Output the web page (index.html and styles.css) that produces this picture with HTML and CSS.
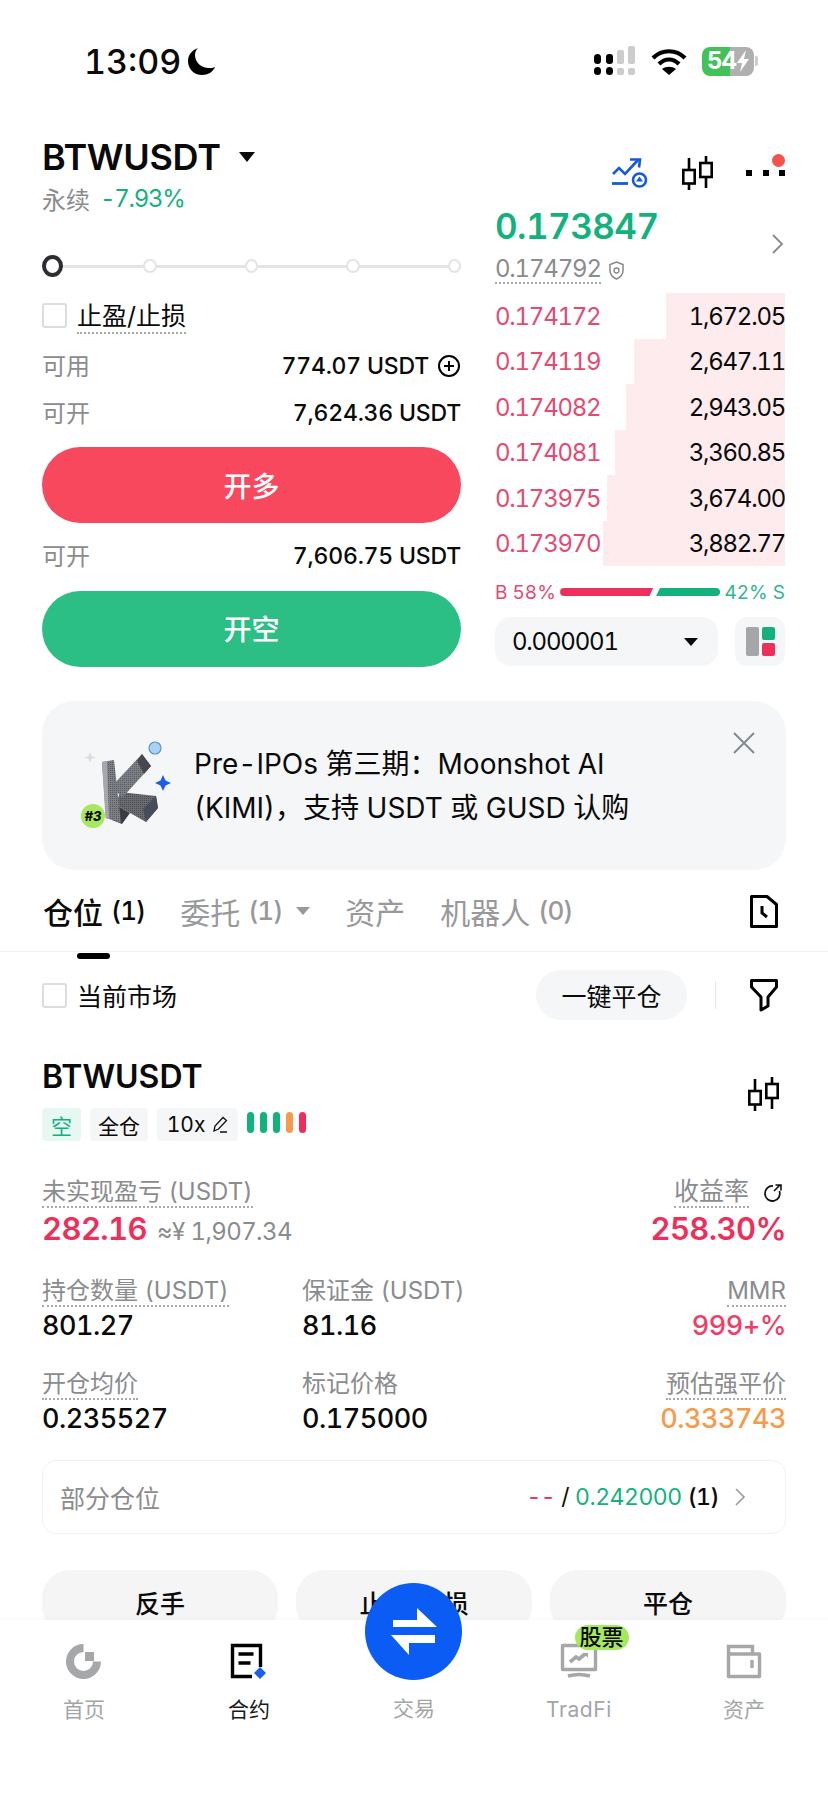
FILE: index.html
```html
<!DOCTYPE html>
<html lang="zh-CN">
<head>
<meta charset="utf-8">
<title>BTWUSDT 永续</title>
<link rel="stylesheet" href="styles.css">
</head>
<body>
<div class="page">

  <header class="status">
    <div class="clock">
      <span>13:09</span>
      <svg class="moon" width="29" height="29" viewBox="0 0 29 29"><path d="M11 1C5 3 1 8 1 14c0 8 6 14 14 14 6 0 11-3 13-8-2 1-4 1-6 1C14 21 8 15 8 8c0-3 1-5 3-7z" fill="#000"/></svg>
    </div>
    <div class="status-icons">
      <svg width="42" height="30" viewBox="0 0 42 30">
        <rect x="0" y="8" width="7" height="10" rx="3.5" fill="#000"/>
        <rect x="12" y="8" width="7" height="10" rx="3" fill="#000"/>
        <rect x="23" y="4" width="7" height="14" rx="2" fill="#ccc"/>
        <rect x="34" y="0" width="7" height="18" rx="2" fill="#ccc"/>
        <rect x="0" y="21" width="7" height="8" rx="3.5" fill="#000"/>
        <rect x="12" y="21" width="7" height="8" rx="3.5" fill="#000"/>
        <rect x="23" y="22" width="7" height="7" rx="2" fill="#ccc"/>
        <rect x="34" y="22" width="7" height="7" rx="2" fill="#ccc"/>
      </svg>
      <svg width="36" height="27" viewBox="0 0 36 27">
        <path d="M2 10C11 1 25 1 34 10" fill="none" stroke="#000" stroke-width="4.2"/>
        <path d="M8 16C14 10 22 10 28 16" fill="none" stroke="#000" stroke-width="4.2"/>
        <path d="M18 27l-7-6c4-3 10-3 14 0z" fill="#000"/>
      </svg>
      <div class="battery">
        <div class="battery-body">
          <span class="battery-level">54</span>
          <svg class="bolt" width="14" height="22" viewBox="0 0 14 22"><path d="M10 0L1 13h5l-2 9 9-13H8z" fill="#fff"/></svg>
        </div>
        <i class="battery-nub"></i>
      </div>
    </div>
  </header>

  <section class="trade">
    <div class="order-form">
      <div class="symbol"><span>BTWUSDT</span><i class="caret caret-lg"></i></div>
      <div class="symbol-sub"><span class="muted">永续</span><span class="up change">-7.93%</span></div>

      <div class="leverage">
        <i class="knob"></i>
        <i class="stop"></i><i class="stop"></i><i class="stop"></i><i class="stop"></i>
      </div>

      <label class="check-row">
        <i class="box"></i><span class="dotted">止盈/止损</span>
      </label>

      <div class="kv kv-avail">
        <span class="muted">可用</span>
        <span class="kv-value">774.07 USDT
          <svg width="24" height="24" viewBox="0 0 24 24"><circle cx="12" cy="12" r="10" fill="none" stroke="#000" stroke-width="2"/><path d="M7 12h10M12 7v10" stroke="#000" stroke-width="2"/></svg>
        </span>
      </div>
      <div class="kv kv-long"><span class="muted">可开</span><span class="kv-value">7,624.36 USDT</span></div>
      <button class="cta cta-long">开多</button>
      <div class="kv kv-short"><span class="muted">可开</span><span class="kv-value">7,606.75 USDT</span></div>
      <button class="cta cta-short">开空</button>
    </div>

    <aside class="market">
      <div class="tools">
        <svg class="tool-strategy" width="36" height="30" viewBox="0 0 36 30">
          <path d="M1 16l6-6 6 6L26 2" fill="none" stroke="#1559e0" stroke-width="2.6"/>
          <path d="M18 1.5h10l-1 8" fill="none" stroke="#1559e0" stroke-width="2.6"/>
          <path d="M0 25.500h16" stroke="#1559e0" stroke-width="2.8"/>
          <circle cx="27.500" cy="22" r="6.500" fill="#fff" stroke="#1559e0" stroke-width="2.6"/>
          <path d="M27.500 18.500l3.500 5h-7z" fill="#1559e0"/>
        </svg>
        <svg class="tool-candles" width="31" height="34" viewBox="0 0 31 34">
          <path d="M7 2v32M24 0v32" stroke="#000" stroke-width="2.6"/>
          <rect x="1.300" y="14" width="11.400" height="13.500" fill="#fff" stroke="#000" stroke-width="2.600"/>
          <rect x="18.300" y="7" width="11.400" height="14" fill="#fff" stroke="#000" stroke-width="2.600"/>
        </svg>
        <div class="more">
          <i></i><i></i><i></i>
          <b class="more-badge"></b>
        </div>
      </div>

      <div class="quote">
        <div>
          <div class="last-price">0.173847</div>
          <div class="mark-line">
            <span class="mark-price">0.174792</span>
            <svg width="15" height="19" viewBox="0 0 15 19"><path d="M7.500 1L14 3.500v6c0 4-3 7-6.500 8.500C4 16.500 1 13.500 1 9.500v-6z" fill="none" stroke="#888" stroke-width="1.500"/><circle cx="7.500" cy="9.500" r="2.500" fill="none" stroke="#888" stroke-width="1.300"/></svg>
          </div>
        </div>
        <svg class="chevron" width="13" height="22" viewBox="0 0 13 22"><path d="M2 2l9 9-9 9" fill="none" stroke="#8a8a8a" stroke-width="1.800"/></svg>
      </div>

      <div class="book">
        <div class="book-row" style="--depth:119px"><span>0.174172</span><b>1,672.05</b></div>
        <div class="book-row" style="--depth:151px"><span>0.174119</span><b>2,647.11</b></div>
        <div class="book-row" style="--depth:159px"><span>0.174082</span><b>2,943.05</b></div>
        <div class="book-row" style="--depth:170px"><span>0.174081</span><b>3,360.85</b></div>
        <div class="book-row" style="--depth:178px"><span>0.173975</span><b>3,674.00</b></div>
        <div class="book-row" style="--depth:182px"><span>0.173970</span><b>3,882.77</b></div>
      </div>

      <div class="ratio">
        <span class="down">B 58%</span>
        <div class="ratio-bar"><i class="ratio-buy"></i><i class="ratio-sell"></i></div>
        <span class="up">42% S</span>
      </div>

      <div class="book-controls">
        <div class="precision"><span>0.000001</span><i class="caret"></i></div>
        <div class="layout-toggle"><i class="lt-side"></i><i class="lt-green"></i><i class="lt-red"></i></div>
      </div>
    </aside>
  </section>

  <section class="banner">
    <svg class="banner-art" width="130" height="130" viewBox="0 0 130 130">
      <defs>
        <pattern id="mesh" width="2" height="2" patternUnits="userSpaceOnUse"><rect width="2" height="2" fill="#7c7f85"/><rect width="1" height="1" fill="#5a5c62"/></pattern>
        <pattern id="meshDark" width="2" height="2" patternUnits="userSpaceOnUse"><rect width="2" height="2" fill="#696b71"/><rect width="1" height="1" fill="#4a4c52"/></pattern>
      </defs>
      <path d="M30 42l1.500 4 4 1.500-4 1.500-1.500 4-1.500-4-4-1.500 4-1.500z" fill="#dcdde0"/>
      <circle cx="95" cy="38" r="6" fill="#a9d2f4" stroke="#5d93c8" stroke-width="1.200"/>
      <path d="M103 65l2.500 5.500 5.500 2.500-5.500 2.500-2.500 5.500-2.500-5.500-5.500-2.500 5.500-2.500z" fill="#1a5ef0"/>
      <path d="M60 82l36 4 2 12-12 14-30-17z" fill="url(#meshDark)"/>
      <path d="M96 86l2 12-12 14-3-13z" fill="#454d5c"/>
      <path d="M56 95l14 8-8 11-10-4z" fill="#3a3c42"/>
      <path d="M42 52l12-2 7 63-15-5z" fill="url(#mesh)"/>
      <path d="M42 52l3.500 56 3.500 1-2-58z" fill="#a5a7ac"/>
      <path d="M52 76l30-32 9 12-29 32z" fill="url(#mesh)"/>
      <path d="M82 44l9 12-7 8-7-13z" fill="#46484e"/>
      <circle cx="33" cy="106" r="12" fill="#a6e85e"/>
      <text class="art-tag" x="33" y="111">#3</text>
    </svg>
    <p class="banner-text">Pre-IPOs 第三期：Moonshot AI<br>(KIMI)，支持 USDT 或 GUSD 认购</p>
    <svg class="banner-close" width="24" height="24" viewBox="0 0 24 24"><path d="M2 2l20 20M22 2L2 22" stroke="#848a90" stroke-width="2"/></svg>
  </section>

  <nav class="tabs">
    <span class="tab tab-active">仓位 <em>(1)</em></span>
    <span class="tab">委托 <em>(1)</em><i class="caret caret-grey"></i></span>
    <span class="tab">资产</span>
    <span class="tab">机器人 <em>(0)</em></span>
    <svg class="tab-history" width="30" height="34" viewBox="0 0 30 34"><path d="M2.500 2.500H18l9.500 8v22H2.500z" fill="none" stroke="#000" stroke-width="3" stroke-linejoin="round"/><path d="M13 12v7l5 4" fill="none" stroke="#000" stroke-width="3"/></svg>
  </nav>

  <div class="filter-row">
    <label class="check-row check-plain"><i class="box"></i><span>当前市场</span></label>
    <div class="filter-actions">
      <span class="pill">一键平仓</span>
      <i class="filter-sep"></i>
      <svg width="30" height="34" viewBox="0 0 30 34"><path d="M2.500 2.500h25V9L19 19v9l-7 4V19L2.500 9z" fill="none" stroke="#000" stroke-width="3" stroke-linejoin="round"/></svg>
    </div>
  </div>

  <section class="position">
    <div class="pos-head">
      <div>
        <div class="pos-symbol">BTWUSDT</div>
        <div class="tags">
          <span class="tag tag-short">空</span>
          <span class="tag">全仓</span>
          <span class="tag tag-lever">10x
            <svg width="15" height="17" viewBox="0 0 15 17"><path d="M1 15L2 10 10 1.500l3.500 3L5.500 13zM7 16h7" fill="none" stroke="#111" stroke-width="1.300"/></svg>
          </span>
          <div class="risk"><i></i><i></i><i></i><i class="risk-warn"></i><i class="risk-bad"></i></div>
        </div>
      </div>
      <svg class="pos-candles" width="31" height="34" viewBox="0 0 31 34">
        <path d="M7 2v32M24 0v32" stroke="#000" stroke-width="2.600"/>
        <rect x="1.300" y="14" width="11.400" height="13.500" fill="#fff" stroke="#000" stroke-width="2.600"/>
        <rect x="18.300" y="7" width="11.400" height="14" fill="#fff" stroke="#000" stroke-width="2.600"/>
      </svg>
    </div>

    <div class="pnl">
      <div>
        <span class="label dotted">未实现盈亏 (USDT)</span>
        <div class="pnl-value"><b class="down">282.16</b><span class="muted fiat">≈¥ 1,907.34</span></div>
      </div>
      <div class="pnl-right">
        <div class="roe-label">
          <span class="label dotted">收益率</span>
          <svg width="20" height="20" viewBox="0 0 20 20"><path d="M16.500 8A7.500 7.500 0 1 1 10 3" fill="none" stroke="#111" stroke-width="1.800"/><path d="M11 8l6-6M12.500 2H18v5.500" fill="none" stroke="#111" stroke-width="1.600"/></svg>
        </div>
        <b class="pnl-roe down">258.30%</b>
      </div>
    </div>

    <div class="stats">
      <div class="stat"><span class="label dotted">持仓数量 (USDT)</span><b>801.27</b></div>
      <div class="stat"><span class="label">保证金 (USDT)</span><b>81.16</b></div>
      <div class="stat stat-end"><span class="label dotted">MMR</span><b class="down-soft">999+%</b></div>
      <div class="stat"><span class="label dotted">开仓均价</span><b>0.235527</b></div>
      <div class="stat"><span class="label">标记价格</span><b>0.175000</b></div>
      <div class="stat stat-end"><span class="label dotted">预估强平价</span><b class="warn">0.333743</b></div>
    </div>

    <div class="partial">
      <span class="muted partial-label">部分仓位</span>
      <div class="partial-right">
        <span class="down">--</span><span>/</span><span class="up">0.242000</span><span class="partial-count">(1)</span>
        <svg width="12" height="20" viewBox="0 0 12 20"><path d="M2 2l8 8-8 8" fill="none" stroke="#999" stroke-width="1.600"/></svg>
      </div>
    </div>

    <div class="actions">
      <button class="action">反手</button>
      <button class="action">止盈/止损</button>
      <button class="action">平仓</button>
    </div>
  </section>

  <footer class="tabbar">
    <div class="tabbar-item">
      <svg width="36" height="36" viewBox="0 0 36 36"><path d="M17.500 1A17.500 17.500 0 1 0 35 18.500H27A9.500 9.500 0 1 1 17.500 9z" fill="#a6a7a9"/><rect x="19" y="9" width="9" height="9" fill="#a6a7a9"/></svg>
      <span>首页</span>
    </div>
    <div class="tabbar-item tabbar-active">
      <svg width="38" height="36" viewBox="0 0 38 36"><path d="M30.500 24V2.500H2.500v31H22" fill="none" stroke="#000" stroke-width="3.400"/><path d="M8.500 11h15M8.500 20h12" stroke="#000" stroke-width="3.400"/><path d="M30 24l6 6-6 6-6-6z" fill="#1a5ef0"/></svg>
      <span>合约</span>
    </div>
    <div class="tabbar-item">
      <i class="tabbar-spacer"></i>
      <span>交易</span>
    </div>
    <div class="tabbar-item">
      <svg width="38" height="36" viewBox="0 0 38 36"><path d="M2.500 2.500h33v24h-33z" fill="none" stroke="#a6a7a9" stroke-width="3.400" stroke-linejoin="round"/><path d="M10 19l6-5 3 2 6-5" fill="none" stroke="#a6a7a9" stroke-width="3.600"/><path d="M23 10h5v5z" fill="#a6a7a9"/><path d="M8 33c7-2 15-2 22 0" fill="none" stroke="#a6a7a9" stroke-width="3.400"/></svg>
      <span class="latin">TradFi</span>
      <span class="tabbar-badge">股票</span>
    </div>
    <div class="tabbar-item">
      <svg width="36" height="36" viewBox="0 0 36 36"><path d="M2.500 10V3.500h24V10" fill="none" stroke="#a6a7a9" stroke-width="3.400"/><path d="M2.500 11h31v22.500h-31z" fill="none" stroke="#a6a7a9" stroke-width="3.400" stroke-linejoin="round"/><path d="M26 17v8" stroke="#a6a7a9" stroke-width="3.400"/></svg>
      <span>资产</span>
    </div>
  </footer>

  <button class="fab">
    <svg width="97" height="97" viewBox="0 0 97 97"><path d="M28 44h44L52 25v12H28zM26 52h44v8H44v12z" fill="#fff"/></svg>
  </button>

</div>
</body>
</html>
```
FILE: styles.css
```css
* { box-sizing: border-box; }

html, body { margin: 0; padding: 0; background: #fff; }

.page {
  position: relative;
  width: 828px;
  height: 1796px;
  overflow: hidden;
  background: #fff;
  color: #0a0a0a;
  font-family: Inter, "Noto Sans CJK SC", sans-serif;
  font-variant-numeric: tabular-nums;
}

i { display: block; font-style: normal; }
em { font-style: normal; }
button { border: 0; font-family: inherit; padding: 0; }

.muted { color: #8b8c8e; }
.up { color: #12b27c; }
.down { color: #ee2f5b; }

/* status bar */
.status {
  height: 122px;
  padding: 0 70px 0 84px;
  display: flex;
  align-items: center;
  justify-content: space-between;
}
.clock {
  display: flex;
  align-items: center;
  gap: 6px;
  font-size: 34px;
  font-weight: 500;
}
.status-icons { display: flex; align-items: center; gap: 15px; }
.battery { display: flex; align-items: center; gap: 1px; }
.battery-body {
  width: 52px;
  height: 29px;
  border-radius: 8px;
  background: linear-gradient(to right, #43c25a 54%, #b0b0b0 54%);
  display: flex;
  align-items: center;
  padding-left: 5px;
}
.battery-level { color: #fff; font-size: 24px; font-weight: 700; line-height: 1; letter-spacing: -1px; }
.battery-nub { width: 3px; height: 10px; background: #ccc; border-radius: 0 2px 2px 0; }

/* trading panel */
.trade { display: flex; padding: 0 43px 0 42px; gap: 34px; }
.order-form { width: 419px; padding-top: 13px; }
.market { width: 290px; padding-top: 33px; }

.symbol {
  display: flex;
  align-items: center;
  gap: 18px;
  height: 44px;
  font-size: 36px;
  font-weight: 600;
  letter-spacing: -0.3px;
}
.caret {
  width: 0;
  height: 0;
  border-left: 7px solid transparent;
  border-right: 7px solid transparent;
  border-top: 8px solid #0a0a0a;
}
.caret-lg { border-left-width: 8px; border-right-width: 8px; border-top-width: 10px; }
.caret-grey { border-top-color: #98999b; margin-left: 6px; }

.symbol-sub {
  margin-top: 2px;
  height: 34px;
  display: flex;
  align-items: center;
  gap: 10px;
  font-size: 24px;
}
.change { letter-spacing: -1.3px; }

.leverage {
  margin-top: 39px;
  height: 24px;
  display: flex;
  align-items: center;
  gap: 88px;
  background: linear-gradient(#e3e4e5, #e3e4e5) center / 100% 3px no-repeat;
}
.knob { width: 22px; height: 22px; border: 4px solid #2b2d30; border-radius: 50%; background: #fff; margin-right: -8px; }
.stop { width: 14px; height: 14px; border: 2px solid #e3e4e5; border-radius: 50%; background: #fff; }

.check-row {
  display: flex;
  align-items: center;
  gap: 10px;
  margin-top: 22px;
  height: 30px;
  font-size: 25px;
}
.box { width: 25px; height: 25px; border: 2px solid #dcdddf; border-radius: 3px; }
.dotted { border-bottom: 2px dotted #a8a9ab; }

.kv {
  display: flex;
  align-items: center;
  justify-content: space-between;
  height: 30px;
  font-size: 24px;
}
.kv .muted { position: relative; top: -2px; }
.kv-avail { margin-top: 21px; }
.kv-long { margin-top: 17px; }
.kv-short { margin-top: 18px; }
.kv-value { display: flex; align-items: center; gap: 8px; font-weight: 500; font-size: 23px; letter-spacing: -0.2px; }

.cta {
  display: block;
  width: 100%;
  height: 76px;
  border-radius: 38px;
  color: #fff;
  font-size: 28px;
  font-weight: 500;
}
.cta-long { margin-top: 19px; background: #f8485e; }
.cta-short { margin-top: 20px; padding-bottom: 3px; background: #2cbf85; }

/* market column */
.tools { display: flex; align-items: center; justify-content: flex-end; height: 36px; }
.tool-strategy { margin-right: 34px; }
.tool-candles { margin-right: 33px; }
.more { position: relative; display: flex; gap: 10.500px; width: 39px; }
.more i { width: 6px; height: 6px; background: #000; }
.more-badge {
  position: absolute;
  right: 0;
  top: -16px;
  width: 13px;
  height: 13px;
  border-radius: 50%;
  background: #f4524a;
}

.quote {
  margin-top: 12px;
  height: 90px;
  display: flex;
  align-items: center;
  justify-content: space-between;
  padding: 0 1px 8px 0;
}
.last-price {
  height: 44px;
  line-height: 44px;
  font-size: 35px;
  font-weight: 600;
  letter-spacing: -0.55px;
  color: #12b27c;
}
.mark-line { display: flex; align-items: center; gap: 8px; height: 28px; margin-top: 8px; color: #8b8c8e; font-size: 24px; }
.mark-price { border-bottom: 2px dotted #a8a9ab; line-height: 26px; letter-spacing: -1.2px; }

.book { display: grid; grid-auto-rows: 45.500px; }
.book-row {
  display: flex;
  align-items: center;
  justify-content: space-between;
  padding-top: 1px;
  font-size: 24px;
  letter-spacing: -1.25px;
  background: linear-gradient(to left, #fdebee var(--depth), transparent var(--depth));
}
.book-row span { color: #e64a70; }
.book-row b { font-weight: 400; }

.ratio {
  display: flex;
  align-items: center;
  justify-content: space-between;
  height: 30px;
  margin-top: 11px;
  font-size: 19px;
}
.ratio .down { color: #e64a70; }
.ratio .up { color: #2fb88a; }
.ratio-bar { display: flex; gap: 3px; width: 160px; }
.ratio-bar i { height: 8px; }
.ratio-buy { width: 93px; background: #ee2f5b; border-radius: 4px 0 0 4px; clip-path: polygon(0 0, 100% 0, 96% 100%, 0 100%); }
.ratio-sell { width: 64px; background: #12b27c; border-radius: 0 4px 4px 0; clip-path: polygon(6% 0, 100% 0, 100% 100%, 0 100%); }

.book-controls { display: flex; gap: 17px; margin-top: 10px; }
.precision {
  width: 223px;
  height: 49px;
  border-radius: 16px;
  background: #f5f6f7;
  padding: 0 20px 0 17px;
  display: flex;
  align-items: center;
  justify-content: space-between;
  font-size: 24px;
  letter-spacing: -1.2px;
}
.layout-toggle {
  width: 50px;
  height: 49px;
  border-radius: 12px;
  background: #f5f6f7;
  display: grid;
  grid-template-columns: 13px 13px;
  grid-template-rows: 13px 13px;
  gap: 3px;
  align-content: center;
  justify-content: center;
}
.lt-side { grid-row: 1 / 3; background: #a5a6a9; border-radius: 2px; }
.lt-green { background: #12b27c; border-radius: 2px; }
.lt-red { background: #ee2f5b; border-radius: 2px; }

/* promo banner */
.banner {
  margin: 34px 42px 0;
  height: 169px;
  border-radius: 32px;
  background: #f5f6f8;
  display: flex;
  align-items: flex-start;
  padding-left: 18px;
}
.banner-art { flex: none; margin-top: 9px; }
.art-tag { font-size: 13px; font-weight: 800; font-style: italic; text-anchor: middle; fill: #0a0a0a; }
.banner-text {
  margin: 41px 0 0 4px;
  width: 539px;
  flex: none;
  font-size: 28px;
  line-height: 44px;
  white-space: nowrap;
}
.banner-close { margin-top: 30px; margin-left: -1px; flex: none; }

/* position tabs */
.tabs {
  height: 82px;
  padding: 0 49px 0 43px;
  display: flex;
  align-items: center;
  gap: 35px;
  border-bottom: 1px solid #f0f1f2;
  font-size: 30px;
  color: #98999b;
}
.tab { position: relative; display: flex; align-items: center; gap: 8px; white-space: nowrap; }
.tab em { font-size: 26px; font-weight: 500; letter-spacing: -1px; }
.tab-active { color: #0a0a0a; font-weight: 500; }
.tab-active::after {
  content: "";
  position: absolute;
  left: 34px;
  bottom: -26px;
  width: 33px;
  height: 6px;
  border-radius: 3px;
  background: #000;
}
.tab-history { margin-left: auto; }

.filter-row {
  padding: 18px 49px 0 42px;
  display: flex;
  align-items: center;
  justify-content: space-between;
}
.check-plain { margin-top: 0; }
.filter-actions { display: flex; align-items: center; }
.pill {
  width: 151px;
  height: 50px;
  border-radius: 25px;
  background: #f5f6f7;
  display: flex;
  align-items: center;
  justify-content: center;
  font-size: 25px;
}
.filter-sep { width: 1px; height: 28px; background: #e8e9ea; margin: 0 33px 0 28px; }

/* open position */
.position { padding: 0 42px; }
.pos-head { display: flex; justify-content: space-between; align-items: flex-start; margin-top: 36px; padding-right: 7px; }
.pos-symbol { height: 42px; line-height: 42px; font-size: 32px; font-weight: 600; }
.pos-candles { margin-top: 21px; }
.tags { display: flex; gap: 9px; align-items: center; margin-top: 10px; }
.tag {
  height: 33px;
  padding: 0 8px;
  display: flex;
  align-items: center;
  gap: 8px;
  border-radius: 4px;
  background: #f5f6f7;
  font-size: 21px;
}
.tag-short { background: #e6f8f1; color: #12b27c; padding: 0 9px; }
.tag-lever { width: 81px; justify-content: center; }
.risk { display: flex; gap: 6px; padding-bottom: 4px; }
.risk i { width: 7px; height: 21px; border-radius: 4px; background: #12b27c; }
.risk .risk-warn { background: #f79a4c; }
.risk .risk-bad { background: #ee2f5b; }

.label { color: #8b8c8e; font-size: 24px; line-height: 29px; display: inline-block; border-bottom: 2px solid transparent; }
.label.dotted { border-bottom: 2px dotted #a8a9ab; }
.pnl { display: flex; justify-content: space-between; margin-top: 36px; }
.pnl-value { display: flex; align-items: baseline; gap: 10px; height: 42px; }
.pnl-value b, .pnl-roe { font-size: 31px; font-weight: 600; line-height: 42px; letter-spacing: -0.6px; }
.fiat { font-size: 24px; letter-spacing: -0.6px; }
.pnl-right { display: flex; flex-direction: column; align-items: flex-end; }
.roe-label { display: flex; align-items: center; gap: 14px; padding-right: 3px; }
.roe-label .label { font-size: 25px; }

.stats {
  display: grid;
  grid-template-columns: 260px 1fr auto;
  grid-auto-rows: 70px;
  row-gap: 23px;
  margin-top: 26px;
}
.stat { display: flex; flex-direction: column; align-items: flex-start; }
.stat b { font-size: 27px; font-weight: 500; line-height: 36px; margin-top: 1px; letter-spacing: -0.5px; }
.stat-end { align-items: flex-end; }
.down-soft { color: #ee3f68; }
.warn { color: #f79a4c; }

.partial {
  margin-top: 21px;
  height: 74px;
  padding: 0 39px 0 17px;
  border: 1px solid #f1f2f3;
  border-radius: 14px;
  display: flex;
  align-items: center;
  justify-content: space-between;
  font-size: 24px;
}
.partial-label { font-size: 25px; }
.partial-right { display: flex; align-items: center; gap: 6px; font-size: 23px; letter-spacing: -0.5px; }
.partial-count { font-weight: 500; }
.partial-right svg { margin-left: 9px; }

.actions { display: flex; gap: 18px; margin-top: 36px; }
.action {
  flex: 1;
  height: 64px;
  border-radius: 28px;
  background: #f5f5f5;
  color: #0a0a0a;
  font-size: 25px;
  font-weight: 500;
}

/* bottom navigation */
.tabbar {
  position: absolute;
  left: 0;
  right: 0;
  bottom: 0;
  height: 176px;
  background: #fff;
  box-shadow: 0 -1px 6px rgba(0, 0, 0, 0.03);
  display: grid;
  grid-template-columns: repeat(5, 165px);
  justify-content: center;
  padding-top: 23px;
}
.tabbar-item {
  position: relative;
  display: flex;
  flex-direction: column;
  align-items: center;
  height: 82px;
  gap: 15px;
  font-size: 21px;
  line-height: 32px;
  color: #a4a5a7;
}
.tabbar-item svg { flex: none; }
.tabbar-spacer { height: 36px; }
.tabbar-active { color: #1a1a1a; }
.latin { letter-spacing: 0.6px; }
.tabbar-badge {
  position: absolute;
  top: -18px;
  left: 78px;
  width: 54px;
  height: 25px;
  border-radius: 13px;
  background: #a6e85e;
  color: #0a0a0a;
  font-size: 22px;
  font-weight: 500;
  line-height: 25px;
  text-align: center;
}
.fab {
  position: absolute;
  left: 365px;
  top: 1583px;
  width: 97px;
  height: 97px;
  border-radius: 50%;
  background: #0a5cf5;
}
.fab svg { display: block; }
```
